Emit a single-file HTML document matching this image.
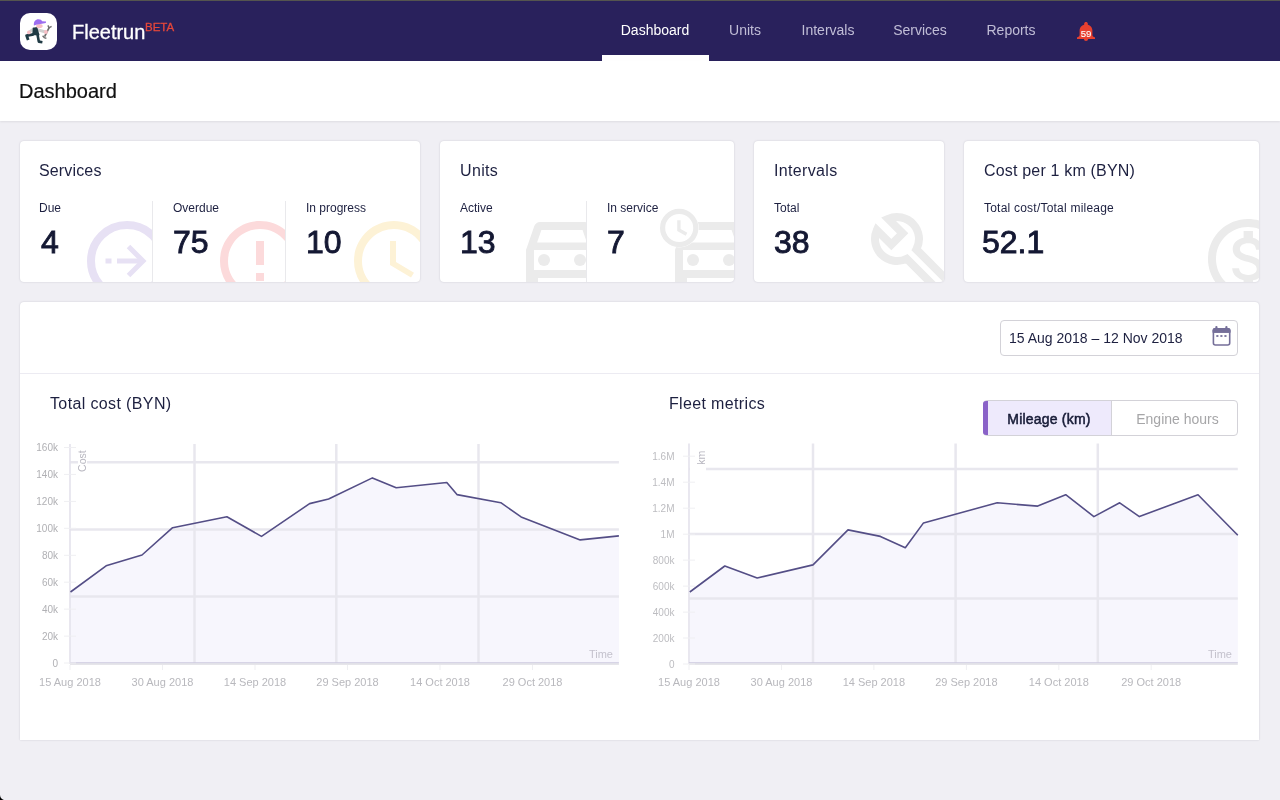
<!DOCTYPE html>
<html><head><meta charset="utf-8"><title>Fleetrun Dashboard</title>
<style>
*{margin:0;padding:0;box-sizing:border-box}
html,body{width:1280px;height:800px;overflow:hidden;background:#f0eff4;font-family:"Liberation Sans",sans-serif}
.a{position:absolute}
.t{position:absolute;white-space:nowrap;line-height:1;will-change:transform}
.hdr{left:0;top:0;width:1280px;height:61px;background:#29215c}
.nav{font-size:14px;top:23px;width:120px;text-align:center;color:#c0bdd6}
.card{background:#fff;border-radius:4px;box-shadow:0 0 2px rgba(20,20,50,.18);overflow:hidden}
.ct{font-size:16px;color:#1d2040;letter-spacing:.35px}
.cl{font-size:12px;color:#1d2040}
.cn{font-size:32px;color:#141833;-webkit-text-stroke:0.9px #141833}
.div{width:1px;background:#e9e9ec}
</style></head><body>

<!-- header -->
<div class="a hdr"></div>
<div class="a" style="left:0;top:0;width:1280px;height:1px;background:#55554f"></div>
<div class="a" style="left:20px;top:13px;width:37px;height:37px;background:#fff;border-radius:10px"></div>
<svg class="a" style="left:20px;top:13px" width="37" height="37" viewBox="0 0 37 37">
  <!-- wrench -->
  <path d="M24.6,23.6 L29.4,14.2" stroke="#707070" stroke-width="1.7" fill="none"/>
  <path d="M27.9,12.4 L29,14.8 L31.6,13.4" stroke="#707070" stroke-width="1.4" fill="none"/>
  <path d="M22.6,22.8 L24.3,24.6 L26.4,25.4" stroke="#707070" stroke-width="1.4" fill="none"/>
  <!-- arms -->
  <path d="M8.9,19.4 L14.4,15.4" stroke="#d0d0d0" stroke-width="3" fill="none"/>
  <path d="M17.2,16.6 L25.6,19" stroke="#d0d0d0" stroke-width="3" fill="none"/>
  <!-- legs -->
  <path d="M13.6,21.3 L6.6,22.6 L8.2,27" stroke="#1f3a44" stroke-width="2.8" fill="none" stroke-linejoin="round"/>
  <path d="M17.4,21 L18.8,28.6 L22.4,29.2" stroke="#1f3a44" stroke-width="2.6" fill="none" stroke-linejoin="round"/>
  <!-- torso -->
  <path d="M12.8,14.8 L17.2,13.9 L19.6,22.2 L12.2,22.2 Z" fill="#1f3a44"/>
  <!-- head -->
  <ellipse cx="19.4" cy="13" rx="3.3" ry="2.1" fill="#f7bfc6"/>
  <!-- hands -->
  <circle cx="8.9" cy="19.4" r="1.9" fill="#f7bfc6"/>
  <circle cx="25.9" cy="19" r="2" fill="#f7bfc6"/>
  <!-- cap -->
  <path d="M13.9,12.6 C13.4,8.6 15.5,6.2 18.5,6.2 C20.5,6.2 21.6,7.1 22.2,8.3 L26.1,8.5 L25.8,10 L19,11.3 C17,11.7 15,12.1 13.9,12.6 Z" fill="#9d6ef0"/>
</svg>
<div class="t" style="left:71.7px;top:22px;font-size:20px;color:#fff;-webkit-text-stroke:.3px #fff">Fleetrun</div>
<div class="t" style="left:145px;top:21.6px;font-size:11.5px;color:#e5473a;-webkit-text-stroke:.3px #e5473a">BETA</div>

<div class="t nav" style="left:595px;color:#fff">Dashboard</div>
<div class="t nav" style="left:685px">Units</div>
<div class="t nav" style="left:768px">Intervals</div>
<div class="t nav" style="left:860px">Services</div>
<div class="t nav" style="left:951px">Reports</div>
<div class="a" style="left:602px;top:55px;width:107px;height:6px;background:#fff"></div>
<svg class="a" style="left:1070px;top:18px" width="32" height="28" viewBox="1070 18 32 28">
  <path d="M1084.2,25.5 L1084.2,23.8 C1084.2,22.6 1085,22 1086,22 C1087,22 1087.8,22.6 1087.8,23.8 L1087.8,25.5 Z" fill="#e8402f"/>
  <path d="M1079.6,35.2 L1079.6,30.6 C1079.6,26.9 1082.3,24.4 1086,24.4 C1089.7,24.4 1092.4,26.9 1092.4,30.6 L1092.4,35.2 C1092.6,36.4 1094,37 1095,37.4 L1095,39 L1077,39 L1077,37.4 C1078,37 1079.4,36.4 1079.6,35.2 Z" fill="#e8402f"/>
  <path d="M1083.9,38.9 A2.1,2.1 0 0 0 1088.1,38.9 Z" fill="#e8402f"/>
  <text x="1086" y="36.7" text-anchor="middle" font-size="9.6" fill="#fff" stroke="#fff" stroke-width="0.1" font-family="Liberation Sans, sans-serif">59</text>
</svg>

<!-- page title -->
<div class="a" style="left:0;top:61px;width:1280px;height:60px;background:#fff;box-shadow:0 1px 2px rgba(0,0,0,.08)"></div>
<div class="t" style="left:18.7px;top:81px;font-size:20px;color:#111;-webkit-text-stroke:.2px #111">Dashboard</div>

<!-- cards -->
<div class="a card" style="left:20px;top:141px;width:400px;height:141px">
  <div class="a" style="left:0;top:0;width:132px;height:141px;overflow:hidden">
    <svg class="a" style="left:59px;top:72px" width="96" height="96" viewBox="0 0 96 96">
      <circle cx="48" cy="48" r="36" fill="none" stroke="#e7e1f4" stroke-width="8"/>
      <rect x="26.5" y="45.5" width="6" height="5" fill="#e7e1f4"/>
      <rect x="38" y="45.5" width="25" height="5" fill="#e7e1f4"/>
      <polyline points="49.5,33.5 64,48 49.5,62.5" fill="none" stroke="#e7e1f4" stroke-width="5"/>
    </svg>
  </div>
  <div class="a" style="left:133px;top:0;width:132px;height:141px;overflow:hidden">
    <svg class="a" style="left:59px;top:72px" width="96" height="96" viewBox="0 0 24 24">
      <path fill="#fcdadb" d="M11 15h2v2h-2zm0-8h2v6h-2zm.99-5C6.47 2 2 6.48 2 12s4.47 10 9.99 10C17.52 22 22 17.52 22 12S17.52 2 11.99 2zM12 20c-4.42 0-8-3.58-8-8s3.58-8 8-8 8 3.58 8 8-3.58 8-8 8z"/>
    </svg>
  </div>
  <svg class="a" style="left:326px;top:72px" width="96" height="96" viewBox="0 0 24 24">
    <path fill="#fdf2d6" d="M11.99 2C6.47 2 2 6.48 2 12s4.47 10 9.99 10C17.52 22 22 17.52 22 12S17.52 2 11.99 2zM12 20c-4.42 0-8-3.58-8-8s3.58-8 8-8 8 3.58 8 8-3.58 8-8 8zm.5-13H11v6l5.25 3.15.75-1.23-4.5-2.67z"/>
  </svg>
  <div class="a div" style="left:132px;top:60px;height:81px"></div>
  <div class="a div" style="left:265px;top:60px;height:81px"></div>
</div>
<div class="a card" style="left:440px;top:141px;width:294px;height:141px">
  <div class="a" style="left:0;top:0;width:146px;height:141px;overflow:hidden">
    <svg class="a" style="left:74.2px;top:61px" width="96" height="96" viewBox="0 0 24 24">
      <path fill="#ebebeb" d="M18.92 6.01C18.72 5.42 18.16 5 17.5 5h-11c-.66 0-1.21.42-1.42 1.01L3 12v8c0 .55.45 1 1 1h1c.55 0 1-.45 1-1v-1h12v1c0 .55.45 1 1 1h1c.55 0 1-.45 1-1v-8l-2.08-5.99zM6.85 7h10.29l1.08 3.11H5.77L6.85 7zM19 17H5v-5h14v5z"/>
      <circle cx="7.5" cy="14.5" r="1.5" fill="#ebebeb"/><circle cx="16.5" cy="14.5" r="1.5" fill="#ebebeb"/>
    </svg>
  </div>
  <svg class="a" style="left:223px;top:61px" width="96" height="96" viewBox="0 0 24 24">
    <path fill="#ebebeb" d="M18.92 6.01C18.72 5.42 18.16 5 17.5 5h-11c-.66 0-1.21.42-1.42 1.01L3 12v8c0 .55.45 1 1 1h1c.55 0 1-.45 1-1v-1h12v1c0 .55.45 1 1 1h1c.55 0 1-.45 1-1v-8l-2.08-5.99zM6.85 7h10.29l1.08 3.11H5.77L6.85 7zM19 17H5v-5h14v5z"/>
    <circle cx="7.5" cy="14.5" r="1.5" fill="#ebebeb"/><circle cx="16.5" cy="14.5" r="1.5" fill="#ebebeb"/>
  </svg>
  <svg class="a" style="left:200px;top:47px" width="80" height="80" viewBox="0 0 80 80">
    <circle cx="39.2" cy="40" r="19.6" fill="#fff"/>
    <circle cx="39.2" cy="40" r="16.6" fill="none" stroke="#ebebeb" stroke-width="5.2"/>
    <polyline points="38.9,32.3 38.9,42 46.5,46.3" fill="none" stroke="#ebebeb" stroke-width="3.4"/>
  </svg>
  <div class="a div" style="left:146px;top:60px;height:81px"></div>
</div>
<div class="a card" style="left:754px;top:141px;width:190px;height:141px">
  <svg class="a" style="left:0;top:0" width="190" height="141" viewBox="754 141 190 141">
    <g transform="translate(897,239) rotate(45)">
      <path d="M100,-6.3 L21.07,-6.3 A22 22 0 0 0 -20.5,-8 L0,-8 L0,8 L-20.5,8 A22 22 0 0 0 20.8,7.1 L100,7.1" fill="none" stroke="#ebebeb" stroke-width="8" stroke-linejoin="miter"/>
    </g>
  </svg>
</div>
<div class="a card" style="left:964px;top:141px;width:295px;height:141px">
  <svg class="a" style="left:235.6px;top:69.6px" width="96" height="96" viewBox="0 0 24 24">
    <path fill="#ebebeb" d="M12 2C6.48 2 2 6.48 2 12s4.48 10 10 10 10-4.480 10-10S17.52 2 12 2zm0 18c-4.41 0-8-3.59-8-8s3.59-8 8-8 8 3.59 8 8-3.59 8-8 8zm.31-8.86c-1.77-.45-2.340-.94-2.34-1.67 0-.84.79-1.43 2.1-1.43 1.38 0 1.9.66 1.94 1.64h1.71c-.05-1.34-.87-2.57-2.49-2.970V5H10.9v1.69c-1.51.32-2.72 1.3-2.72 2.81 0 1.79 1.49 2.69 3.66 3.21 1.95.46 2.34 1.15 2.34 1.87 0 .53-.39 1.39-2.1 1.39-1.6 0-2.23-.72-2.32-1.64H8.04c.1 1.7 1.36 2.66 2.86 2.97V19h2.34v-1.67c1.52-.29 2.72-1.16 2.73-2.77-.01-2.2-1.9-2.96-3.66-3.42z"/>
  </svg>
</div>

<div class="t ct" style="left:39px;top:162.5px;letter-spacing:.15px">Services</div>
<div class="t cl" style="left:39px;top:201.5px">Due</div>
<div class="t cl" style="left:173px;top:201.5px">Overdue</div>
<div class="t cl" style="left:306px;top:201.5px">In progress</div>
<div class="t cn" style="left:40.5px;top:225.5px">4</div>
<div class="t cn" style="left:173px;top:225.5px">75</div>
<div class="t cn" style="left:306px;top:225.5px">10</div>

<div class="t ct" style="left:459.5px;top:162.5px">Units</div>
<div class="t cl" style="left:459.5px;top:201.5px">Active</div>
<div class="t cl" style="left:607px;top:201.5px">In service</div>
<div class="t cn" style="left:460px;top:225.5px">13</div>
<div class="t cn" style="left:607px;top:225.5px">7</div>

<div class="t ct" style="left:774px;top:162.5px">Intervals</div>
<div class="t cl" style="left:774px;top:201.5px">Total</div>
<div class="t cn" style="left:774px;top:225.5px">38</div>

<div class="t ct" style="left:984px;top:162.5px;letter-spacing:.18px">Cost per 1 km (BYN)</div>
<div class="t cl" style="left:984px;top:201.5px;letter-spacing:.22px">Total cost/Total mileage</div>
<div class="t cn" style="left:982px;top:225.5px">52.1</div>

<!-- panel -->
<div class="a" style="left:20px;top:302px;width:1239px;height:438px;background:#fff;border-radius:4px 4px 0 0;box-shadow:0 0 2px rgba(20,20,50,.18)"></div>
<div class="a" style="left:20px;top:373px;width:1239px;height:1px;background:#ecebf2"></div>

<div class="a" style="left:1000px;top:320px;width:238px;height:36px;border:1px solid #d3d2d8;border-radius:4px"></div>
<div class="t" style="left:1009px;top:331px;font-size:14px;color:#1d2040">15 Aug 2018 – 12 Nov 2018</div>
<svg class="a" style="left:1206px;top:322px" width="30" height="28" viewBox="1206 322 30 28">
  <rect x="1213.4" y="328.9" width="16.3" height="16.1" rx="2" fill="none" stroke="#756f99" stroke-width="1.6"/>
  <rect x="1212.6" y="328.1" width="17.9" height="4.7" rx="2" fill="#756f99"/>
  <rect x="1212.6" y="330.5" width="17.9" height="2.3" fill="#756f99"/>
  <rect x="1215.3" y="326" width="2.2" height="3" rx="1" fill="#756f99"/>
  <rect x="1225.3" y="326" width="2.2" height="3" rx="1" fill="#756f99"/>
  <rect x="1216.3" y="335.1" width="2.1" height="1.8" fill="#756f99"/>
  <rect x="1220.35" y="335.1" width="2.1" height="1.8" fill="#756f99"/>
  <rect x="1224.4" y="335.1" width="2.1" height="1.8" fill="#756f99"/>
</svg>

<div class="t" style="left:49.5px;top:395.5px;font-size:16px;color:#1d2040;letter-spacing:.37px">Total cost (BYN)</div>
<div class="t" style="left:669px;top:395.5px;font-size:16px;color:#1d2040;letter-spacing:.35px">Fleet metrics</div>

<div class="a" style="left:983px;top:400px;width:255px;height:36px;border:1px solid #d3d2d8;border-radius:4px;overflow:hidden">
  <div class="a" style="left:0;top:0;width:128px;height:34px;background:#eeeafc;border-right:1px solid #d3d2d8"></div>
</div>
<div class="a" style="left:983px;top:401px;width:5px;height:34px;background:#8a62c8;border-radius:3px 0 0 3px"></div>
<div class="t" style="left:985px;top:412px;width:128px;text-align:center;font-size:14px;color:#161a36;-webkit-text-stroke:.5px #161a36;letter-spacing:.2px">Mileage (km)</div>
<div class="t" style="left:1114px;top:412px;width:127px;text-align:center;font-size:14px;color:#a6a6a8">Engine hours</div>

<svg class="a" style="left:0;top:790px" width="10" height="10" viewBox="0 790 10 10"><path d="M0,795 C0.3,797.8 1.6,799.4 4,800 L0,800 Z" fill="#000"/></svg>
<!-- charts -->
<svg class="a" style="left:0;top:0;will-change:transform" width="1280" height="800" viewBox="0 0 1280 800" font-family="Liberation Sans, sans-serif">
<polygon points="70.5,663 70.5,592.0 106.1,565.8 142.0,555.0 172.6,527.7 226.9,516.8 261.5,536.4 309.6,503.6 328.6,499.0 372.4,477.9 396.2,487.8 446.8,482.5 457.0,494.6 500.8,502.7 521.1,516.9 580.2,539.9 618.9,535.9 618.9,663" fill="#f7f6fd"/>
<line x1="70" y1="462.25" x2="618.9" y2="462.25" stroke="#e8e7ee" stroke-width="2.5"/>
<line x1="70" y1="529.6" x2="618.9" y2="529.6" stroke="#e8e7ee" stroke-width="2.5"/>
<line x1="70" y1="596.6" x2="618.9" y2="596.6" stroke="#e8e7ee" stroke-width="2.5"/>
<line x1="194.5" y1="444" x2="194.5" y2="663" stroke="#e8e7ee" stroke-width="2.5"/>
<line x1="336.3" y1="444" x2="336.3" y2="663" stroke="#e8e7ee" stroke-width="2.5"/>
<line x1="478.5" y1="444" x2="478.5" y2="663" stroke="#e8e7ee" stroke-width="2.5"/>
<rect x="78" y="449" width="9" height="25" fill="#fff"/>
<text x="0" y="0" transform="translate(86.2,461.1) rotate(-90)" text-anchor="middle" font-size="10.5" fill="#b8b7c0">Cost</text>
<line x1="70" y1="444" x2="70" y2="664" stroke="#e4e2ec" stroke-width="1.6"/>
<line x1="70" y1="664" x2="618.9" y2="664" stroke="#e6e5ea" stroke-width="2.2"/>
<line x1="70" y1="662.7" x2="618.9" y2="662.7" stroke="#cfcce0" stroke-width="1"/>
<line x1="64" y1="447.5" x2="76" y2="447.5" stroke="#efeff2" stroke-width="1"/>
<text x="58" y="451.1" text-anchor="end" font-size="10" fill="#b0b0b4">160k</text>
<line x1="64" y1="474.4" x2="76" y2="474.4" stroke="#efeff2" stroke-width="1"/>
<text x="58" y="478.0" text-anchor="end" font-size="10" fill="#b0b0b4">140k</text>
<line x1="64" y1="501.4" x2="76" y2="501.4" stroke="#efeff2" stroke-width="1"/>
<text x="58" y="505.0" text-anchor="end" font-size="10" fill="#b0b0b4">120k</text>
<line x1="64" y1="528.3" x2="76" y2="528.3" stroke="#efeff2" stroke-width="1"/>
<text x="58" y="531.9" text-anchor="end" font-size="10" fill="#b0b0b4">100k</text>
<line x1="64" y1="555.3" x2="76" y2="555.3" stroke="#efeff2" stroke-width="1"/>
<text x="58" y="558.9" text-anchor="end" font-size="10" fill="#b0b0b4">80k</text>
<line x1="64" y1="582.2" x2="76" y2="582.2" stroke="#efeff2" stroke-width="1"/>
<text x="58" y="585.8" text-anchor="end" font-size="10" fill="#b0b0b4">60k</text>
<line x1="64" y1="609.1" x2="76" y2="609.1" stroke="#efeff2" stroke-width="1"/>
<text x="58" y="612.7" text-anchor="end" font-size="10" fill="#b0b0b4">40k</text>
<line x1="64" y1="636.1" x2="76" y2="636.1" stroke="#efeff2" stroke-width="1"/>
<text x="58" y="639.7" text-anchor="end" font-size="10" fill="#b0b0b4">20k</text>
<line x1="64" y1="663.0" x2="76" y2="663.0" stroke="#efeff2" stroke-width="1"/>
<text x="58" y="666.6" text-anchor="end" font-size="10" fill="#b0b0b4">0</text>
<line x1="70.0" y1="665" x2="70.0" y2="670" stroke="#efeff2" stroke-width="1"/>
<text x="70.0" y="686" text-anchor="middle" font-size="11" fill="#b8b8bd">15 Aug 2018</text>
<line x1="162.5" y1="665" x2="162.5" y2="670" stroke="#efeff2" stroke-width="1"/>
<text x="162.5" y="686" text-anchor="middle" font-size="11" fill="#b8b8bd">30 Aug 2018</text>
<line x1="255.0" y1="665" x2="255.0" y2="670" stroke="#efeff2" stroke-width="1"/>
<text x="255.0" y="686" text-anchor="middle" font-size="11" fill="#b8b8bd">14 Sep 2018</text>
<line x1="347.5" y1="665" x2="347.5" y2="670" stroke="#efeff2" stroke-width="1"/>
<text x="347.5" y="686" text-anchor="middle" font-size="11" fill="#b8b8bd">29 Sep 2018</text>
<line x1="440.0" y1="665" x2="440.0" y2="670" stroke="#efeff2" stroke-width="1"/>
<text x="440.0" y="686" text-anchor="middle" font-size="11" fill="#b8b8bd">14 Oct 2018</text>
<line x1="532.5" y1="665" x2="532.5" y2="670" stroke="#efeff2" stroke-width="1"/>
<text x="532.5" y="686" text-anchor="middle" font-size="11" fill="#b8b8bd">29 Oct 2018</text>
<text x="613" y="658" text-anchor="end" font-size="11" fill="#c4c2cd">Time</text>
<polyline points="70.5,592.0 106.1,565.8 142.0,555.0 172.6,527.7 226.9,516.8 261.5,536.4 309.6,503.6 328.6,499.0 372.4,477.9 396.2,487.8 446.8,482.5 457.0,494.6 500.8,502.7 521.1,516.9 580.2,539.9 618.9,535.9" fill="none" stroke="#544e86" stroke-width="1.6" stroke-linejoin="round"/>
<polygon points="689.8,663 689.8,592.0 724.8,566.0 757.2,578.0 813.0,564.9 848.0,529.9 880.4,536.4 905.3,547.8 923.5,522.9 997.2,502.8 1037.7,506.1 1065.7,494.7 1093.9,516.6 1119.7,502.8 1139.4,516.6 1198.0,494.7 1237.8,535.2 1237.8,663" fill="#f7f6fd"/>
<line x1="689" y1="469.1" x2="1237.8" y2="469.1" stroke="#e8e7ee" stroke-width="2.5"/>
<line x1="689" y1="534" x2="1237.8" y2="534" stroke="#e8e7ee" stroke-width="2.5"/>
<line x1="689" y1="598.5" x2="1237.8" y2="598.5" stroke="#e8e7ee" stroke-width="2.5"/>
<line x1="813" y1="443.5" x2="813" y2="663" stroke="#e8e7ee" stroke-width="2.5"/>
<line x1="955.6" y1="443.5" x2="955.6" y2="663" stroke="#e8e7ee" stroke-width="2.5"/>
<line x1="1097.8" y1="443.5" x2="1097.8" y2="663" stroke="#e8e7ee" stroke-width="2.5"/>
<rect x="690" y="448" width="16" height="23" fill="#fff"/>
<text x="0" y="0" transform="translate(705,457.8) rotate(-90)" text-anchor="middle" font-size="10.5" fill="#b8b7c0">km</text>
<line x1="689" y1="443.5" x2="689" y2="664" stroke="#e4e2ec" stroke-width="1.6"/>
<line x1="689" y1="664" x2="1237.8" y2="664" stroke="#e6e5ea" stroke-width="2.2"/>
<line x1="689" y1="662.7" x2="1237.8" y2="662.7" stroke="#cfcce0" stroke-width="1"/>
<line x1="683" y1="456.2" x2="695" y2="456.2" stroke="#efeff2" stroke-width="1"/>
<text x="674.5" y="459.9" text-anchor="end" font-size="10" fill="#bdbdc1">1.6M</text>
<line x1="683" y1="482.2" x2="695" y2="482.2" stroke="#efeff2" stroke-width="1"/>
<text x="674.5" y="485.8" text-anchor="end" font-size="10" fill="#bdbdc1">1.4M</text>
<line x1="683" y1="508.2" x2="695" y2="508.2" stroke="#efeff2" stroke-width="1"/>
<text x="674.5" y="511.8" text-anchor="end" font-size="10" fill="#bdbdc1">1.2M</text>
<line x1="683" y1="534.2" x2="695" y2="534.2" stroke="#efeff2" stroke-width="1"/>
<text x="674.5" y="537.8" text-anchor="end" font-size="10" fill="#bdbdc1">1M</text>
<line x1="683" y1="560.1" x2="695" y2="560.1" stroke="#efeff2" stroke-width="1"/>
<text x="674.5" y="563.7" text-anchor="end" font-size="10" fill="#bdbdc1">800k</text>
<line x1="683" y1="586.1" x2="695" y2="586.1" stroke="#efeff2" stroke-width="1"/>
<text x="674.5" y="589.7" text-anchor="end" font-size="10" fill="#bdbdc1">600k</text>
<line x1="683" y1="612.1" x2="695" y2="612.1" stroke="#efeff2" stroke-width="1"/>
<text x="674.5" y="615.7" text-anchor="end" font-size="10" fill="#bdbdc1">400k</text>
<line x1="683" y1="638.0" x2="695" y2="638.0" stroke="#efeff2" stroke-width="1"/>
<text x="674.5" y="641.6" text-anchor="end" font-size="10" fill="#bdbdc1">200k</text>
<line x1="683" y1="664.0" x2="695" y2="664.0" stroke="#efeff2" stroke-width="1"/>
<text x="674.5" y="667.6" text-anchor="end" font-size="10" fill="#bdbdc1">0</text>
<line x1="689.0" y1="665" x2="689.0" y2="670" stroke="#efeff2" stroke-width="1"/>
<text x="689.0" y="686" text-anchor="middle" font-size="11" fill="#b8b8bd">15 Aug 2018</text>
<line x1="781.5" y1="665" x2="781.5" y2="670" stroke="#efeff2" stroke-width="1"/>
<text x="781.5" y="686" text-anchor="middle" font-size="11" fill="#b8b8bd">30 Aug 2018</text>
<line x1="873.9" y1="665" x2="873.9" y2="670" stroke="#efeff2" stroke-width="1"/>
<text x="873.9" y="686" text-anchor="middle" font-size="11" fill="#b8b8bd">14 Sep 2018</text>
<line x1="966.4" y1="665" x2="966.4" y2="670" stroke="#efeff2" stroke-width="1"/>
<text x="966.4" y="686" text-anchor="middle" font-size="11" fill="#b8b8bd">29 Sep 2018</text>
<line x1="1058.8" y1="665" x2="1058.8" y2="670" stroke="#efeff2" stroke-width="1"/>
<text x="1058.8" y="686" text-anchor="middle" font-size="11" fill="#b8b8bd">14 Oct 2018</text>
<line x1="1151.2" y1="665" x2="1151.2" y2="670" stroke="#efeff2" stroke-width="1"/>
<text x="1151.2" y="686" text-anchor="middle" font-size="11" fill="#b8b8bd">29 Oct 2018</text>
<text x="1232" y="658" text-anchor="end" font-size="11" fill="#c4c2cd">Time</text>
<polyline points="689.8,592.0 724.8,566.0 757.2,578.0 813.0,564.9 848.0,529.9 880.4,536.4 905.3,547.8 923.5,522.9 997.2,502.8 1037.7,506.1 1065.7,494.7 1093.9,516.6 1119.7,502.8 1139.4,516.6 1198.0,494.7 1237.8,535.2" fill="none" stroke="#544e86" stroke-width="1.6" stroke-linejoin="round"/>
</svg>
<!-- /charts -->
</body></html>
